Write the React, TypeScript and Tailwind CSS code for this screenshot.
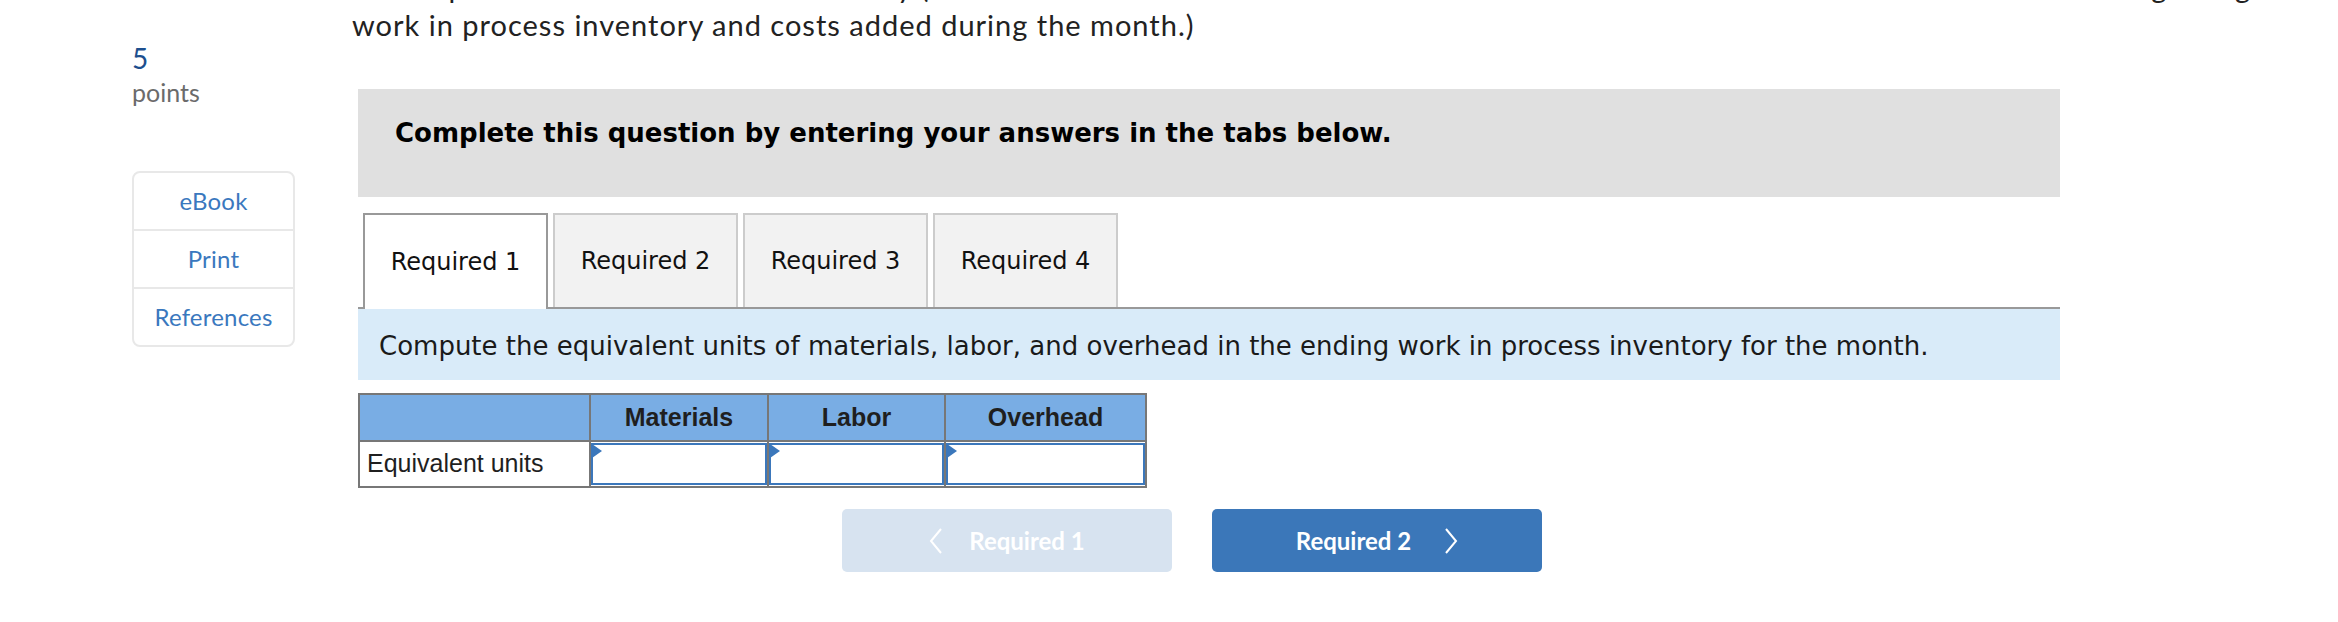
const sideLinks = ["eBook", "Print", "References"];
const tabs = ["Required 1", "Required 2", "Required 3", "Required 4"];
const columns = [
	{ label: "Materials", width: "w-[178px]" },
	{ label: "Labor", width: "w-[177px]" },
	{ label: "Overhead", width: "w-[201px]" },
];

function Chevron({ dir }: { dir: "left" | "right" }) {
	return (
		<svg width="14" height="28" viewBox="0 0 14 28" fill="none" aria-hidden>
			<polyline
				points={dir === "left" ? "12,2 2,14 12,26" : "2,2 12,14 2,26"}
				stroke="currentColor"
				strokeWidth="2"
			/>
		</svg>
	);
}

function AnswerCell() {
	return (
		<td className="h-[46px] border-2 border-[#777777] p-0">
			<div className="relative h-[42px] border-2 border-[#3b77bb] bg-white">
				<svg
					className="absolute -left-[1px] -top-[1px]"
					width="12"
					height="16"
					viewBox="0 0 12 16"
					aria-hidden
				>
					<polygon points="0,0 10,7 0,14" fill="#3b77bb" />
				</svg>
			</div>
		</td>
	);
}

export default function App() {
	return (
		<div className="min-h-[622px] overflow-hidden bg-white font-['Lato',sans-serif]">
			<div className="flex items-start">
				<aside className="ml-[132px] w-[163px] shrink-0 pt-[42px]">
					<div className="text-[28px] leading-[32px] text-[#1d4f8e]">5</div>
					<div className="mt-[3px] text-[25px] leading-[30px] text-[#6b6b6b]">
						points
					</div>
					<nav className="mt-[64px] rounded-[8px] border-2 border-[#e8e8e8] bg-white">
						{sideLinks.map((label, i) => (
							<div
								key={label}
								className={
									i === 0
										? "flex h-[56px] items-center justify-center text-[24px] tracking-[0.2px] text-[#3a78be]"
										: "flex h-[58px] items-center justify-center border-t-2 border-[#e8e8e8] text-[24px] tracking-[0.2px] text-[#3a78be]"
								}
							>
								{label}
							</div>
						))}
					</nav>
				</aside>

				<main className="ml-[57px] min-w-0 flex-1">
					<div className="-mt-[32px] whitespace-nowrap text-[29px] leading-[38px] tracking-[1px] text-[#222222]">
						<div>
							3. Compute the cost of units in inventory (Include both the costs that
							were transferred out in the month and also the costs in the beginning
						</div>
						<div>work in process inventory and costs added during the month.)</div>
					</div>

					<div className="ml-[6px] mt-[45px] w-[1702px]">
						<div className="h-[108px] bg-[#e0e0e0] pl-[37px] pt-[28px] font-['DejaVu_Sans',sans-serif] text-[26px] font-bold leading-[32px] text-black">
							Complete this question by entering your answers in the tabs below.
						</div>

						<div className="mt-[16px] flex gap-[5px] border-b-2 border-[#999999] pl-[5px] font-['DejaVu_Sans',sans-serif] text-[24px] text-[#111111]">
							{tabs.map((tab, i) => (
								<div
									key={tab}
									className={
										i === 0
											? "-mb-[2px] flex h-[96px] w-[185px] items-center justify-center border-2 border-b-0 border-[#999999] bg-white"
											: "flex h-[94px] w-[185px] items-center justify-center border-2 border-b-0 border-[#cccccc] bg-[#f2f2f2]"
									}
								>
									{tab}
								</div>
							))}
						</div>

						<div className="flex h-[71px] items-center bg-[#d9ebf9] pl-[21px] pt-[3px] font-['DejaVu_Sans',sans-serif] text-[26px] text-[#1a1a1a]">
							Compute the equivalent units of materials, labor, and overhead in the
							ending work in process inventory for the month.
						</div>

						<table className="mt-[13px] border-collapse font-['Liberation_Sans',Arial,sans-serif] text-[25px] text-[#1f1f1f]">
							<thead>
								<tr className="bg-[#79ade4]">
									<th className="h-[47px] w-[231px] border-2 border-[#777777]" />
									{columns.map((col) => (
										<th
											key={col.label}
											className={`h-[47px] ${col.width} border-2 border-[#777777] text-center font-bold`}
										>
											{col.label}
										</th>
									))}
								</tr>
							</thead>
							<tbody>
								<tr>
									<td className="h-[46px] border-2 border-[#777777] bg-white pl-[7px] text-left">
										Equivalent units
									</td>
									<AnswerCell />
									<AnswerCell />
									<AnswerCell />
								</tr>
							</tbody>
						</table>

						<div className="ml-[484px] mt-[21px] flex gap-[40px] text-[24px] font-bold text-white">
							<button
								type="button"
								className="flex h-[63px] w-[330px] items-center justify-center gap-[26px] rounded-[5px] bg-[#d7e3f0]"
							>
								<Chevron dir="left" />
								<span>Required 1</span>
							</button>
							<button
								type="button"
								className="flex h-[63px] w-[330px] items-center justify-center gap-[33px] rounded-[5px] bg-[#3b77b9]"
							>
								<span>Required 2</span>
								<Chevron dir="right" />
							</button>
						</div>
					</div>
				</main>
			</div>
		</div>
	);
}
